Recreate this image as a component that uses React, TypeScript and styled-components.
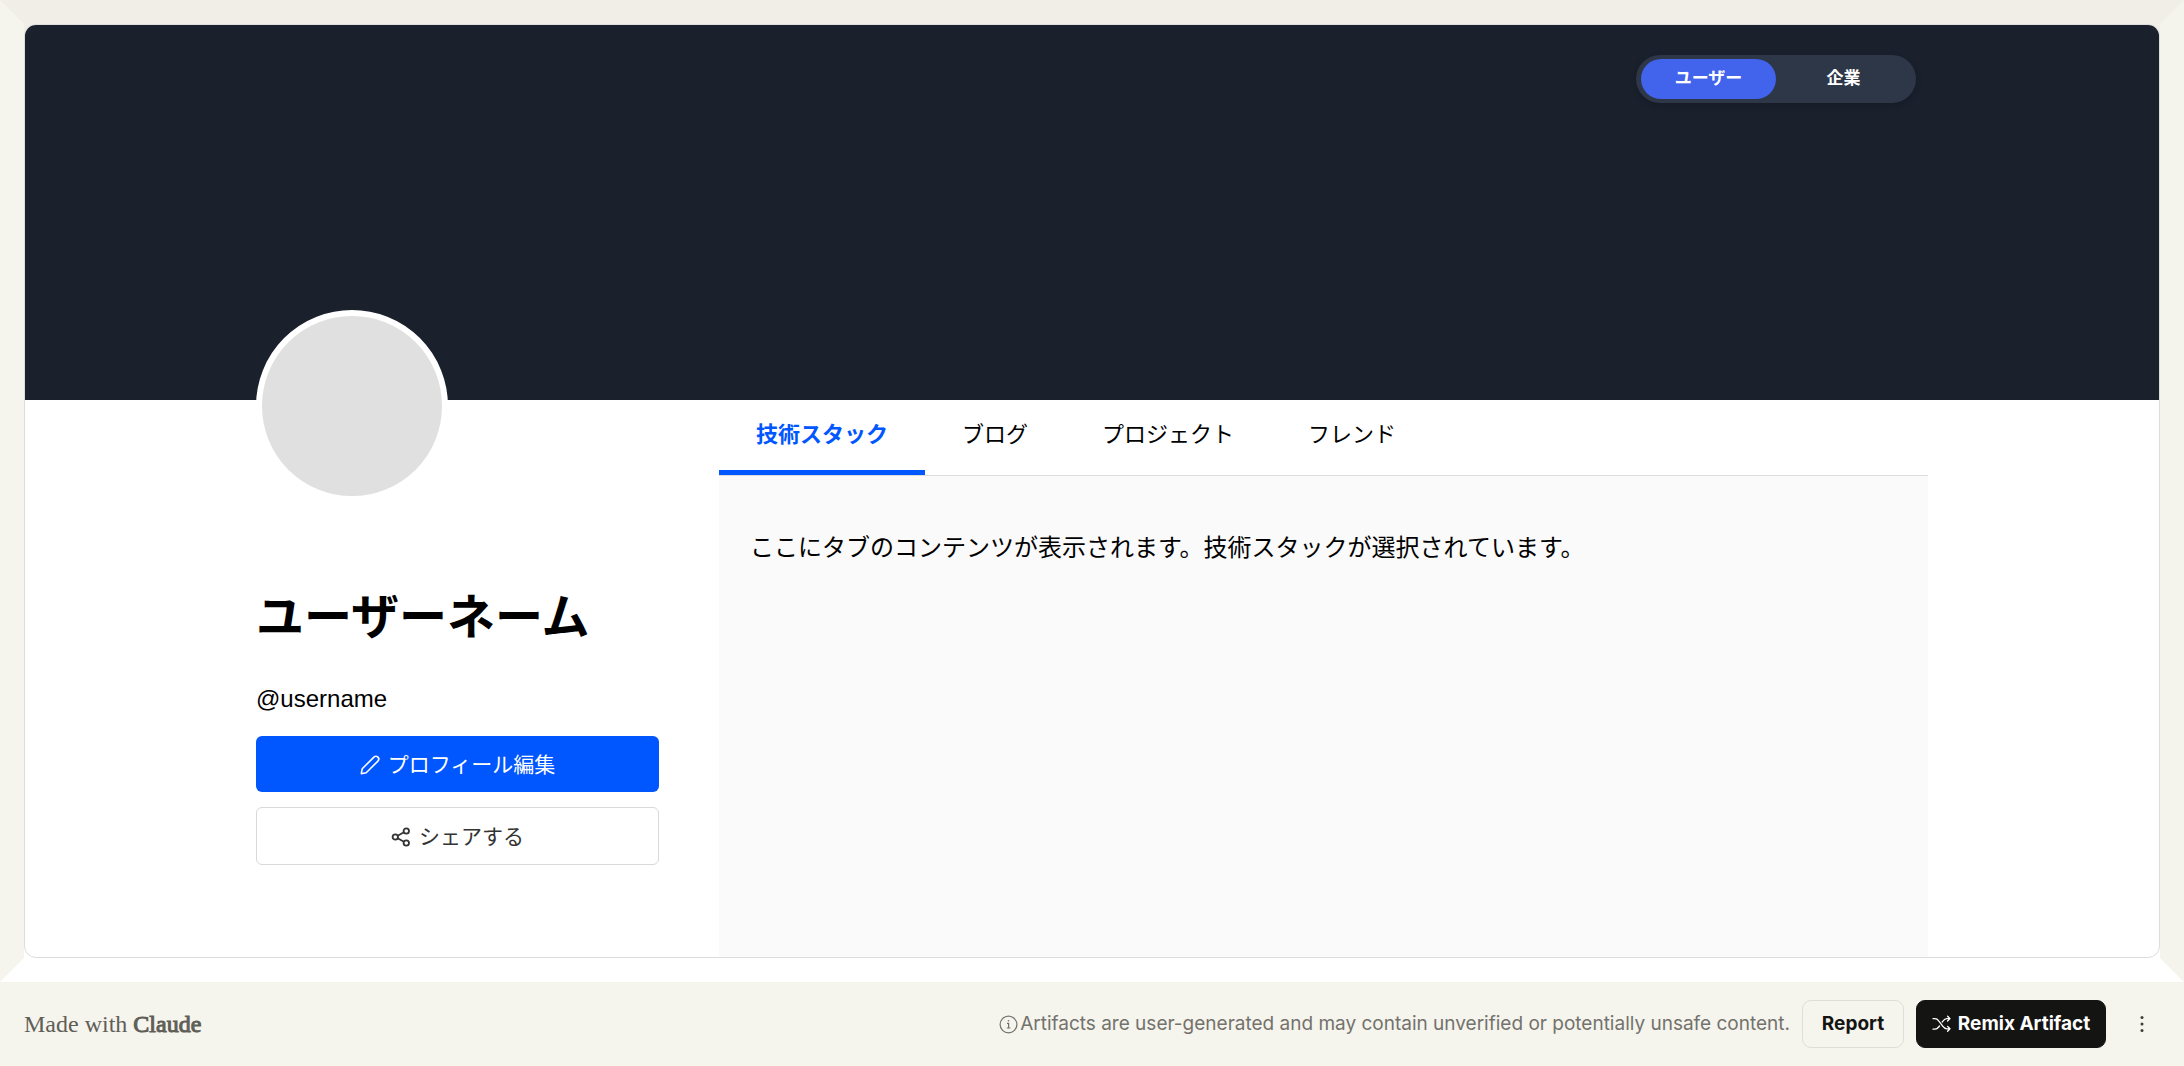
import React, { useState } from "react";
import styled, { createGlobalStyle } from "styled-components";

const jp = `"Liberation Sans", "Noto Sans CJK JP", sans-serif`;
const ui = `Inter, "Noto Sans", sans-serif`;

const GlobalStyle = createGlobalStyle`
  *, *::before, *::after { box-sizing: border-box; }
  body { margin: 0; background: #f5f4ed; font-family: ${jp}; color: #000; }
  button { font-family: inherit; cursor: pointer; }
  h1, p { margin: 0; }
`;

const Page = styled.div`
  display: flex;
  flex-direction: column;
  min-height: 100vh;
`;

const Frame = styled.div`
  flex: 1;
  display: flex;
  border: 24px solid;
  border-color: #f0eee6 #f4f3ec #ffffff #f5f5ed;
  background: linear-gradient(#f0eee6 50%, #ffffff 50%);
`;

const Card = styled.div`
  flex: 1;
  display: flex;
  flex-direction: column;
  min-width: 0;
  overflow: hidden;
  background: #fff;
  border: 1px solid #dddddb;
  border-radius: 12px;
`;

const Cover = styled.header`
  height: 375px;
  padding-top: 30px;
  background: #1a202c;
`;

const Container = styled.div`
  width: 100%;
  max-width: 1672px;
  margin: 0 auto;
`;

const CoverBar = styled(Container)`
  display: flex;
  justify-content: flex-end;
  padding-right: 12px;
`;

const ModeSwitch = styled.div`
  display: flex;
  padding: 4px 5px;
  border-radius: 25px;
  background: #2d3748;
  box-shadow: 0 2px 6px rgba(0, 0, 0, 0.15);
`;

const ModeButton = styled.button<{ $active: boolean }>`
  width: 135px;
  height: 40px;
  padding: 0;
  border: 0;
  border-radius: 20px;
  background: ${(p) => (p.$active ? "#4263eb" : "transparent")};
  color: #fff;
  font-size: 17px;
  font-weight: 700;
  line-height: 24px;
`;

const Body = styled(Container)`
  flex: 1;
  display: grid;
  grid-template-columns: 403px minmax(0, 1fr);
  column-gap: 60px;
`;

const Profile = styled.aside`
  margin-top: -90px;
  padding-bottom: 32px;
`;

const Avatar = styled.div`
  width: 192px;
  height: 192px;
  border: 6px solid #fff;
  border-radius: 50%;
  background: #e0e0e0;
`;

const Name = styled.h1`
  margin-top: 80px;
  font-size: 48px;
  font-weight: 700;
  line-height: 72px;
`;

const Handle = styled.p`
  margin-top: 27px;
  font-size: 24px;
  line-height: 36px;
`;

const Actions = styled.div`
  display: flex;
  flex-direction: column;
  gap: 15px;
  margin-top: 19px;
`;

const ActionButton = styled.button<{ $primary?: boolean }>`
  display: flex;
  align-items: center;
  justify-content: center;
  gap: 8px;
  height: ${(p) => (p.$primary ? "56px" : "58px")};
  padding: 2px 0 0;
  border: ${(p) => (p.$primary ? "0" : "1px solid #d9d9d9")};
  border-radius: 6px;
  background: ${(p) => (p.$primary ? "#0056ff" : "#fff")};
  color: ${(p) => (p.$primary ? "#fff" : "#333")};
  font-size: 21px;
  line-height: 32px;
`;

const Main = styled.main`
  display: flex;
  flex-direction: column;
  min-width: 0;
`;

const TabList = styled.div`
  display: flex;
  height: 76px;
  border-bottom: 1px solid #dcdcdc;
`;

const Tab = styled.button<{ $active: boolean }>`
  height: 75px;
  padding: 0 37px;
  border: 0;
  border-bottom: 5px solid ${(p) => (p.$active ? "#0056ff" : "transparent")};
  background: none;
  color: ${(p) => (p.$active ? "#0056ff" : "#000")};
  font-size: 22px;
  font-weight: ${(p) => (p.$active ? 700 : 400)};
  line-height: 32px;
  white-space: nowrap;
`;

const TabPanel = styled.div`
  flex: 1;
  padding: 54px 31px;
  background: #fafafa;
  font-size: 24px;
  line-height: 36px;
`;

const Footer = styled.footer`
  display: flex;
  align-items: center;
  gap: 12px;
  height: 84px;
  padding: 0 18px 0 24px;
  background: #f5f4ed;
  font-family: ${ui};
`;

const Brand = styled.a`
  margin-right: auto;
  color: #5f5e57;
  font-family: "Liberation Serif", serif;
  font-size: 24px;
  line-height: 32px;
  text-decoration: none;
`;

const BrandName = styled.span`
  -webkit-text-stroke: 1px #5f5e57;
`;

const Notice = styled.p`
  display: flex;
  align-items: center;
  gap: 2px;
  color: #73726c;
  font-size: 19px;
  line-height: 28px;
`;

const FooterButton = styled.button<{ $dark?: boolean }>`
  display: flex;
  align-items: center;
  justify-content: center;
  gap: 7px;
  width: ${(p) => (p.$dark ? "190px" : "102px")};
  height: 48px;
  padding: 0;
  border: 1px solid ${(p) => (p.$dark ? "#141413" : "#dfded6")};
  border-radius: 9px;
  background: ${(p) => (p.$dark ? "#141413" : "transparent")};
  color: ${(p) => (p.$dark ? "#fff" : "#141413")};
  font-size: 19px;
  font-weight: 700;
  line-height: 28px;
  white-space: nowrap;
`;

const MenuButton = styled.button`
  display: grid;
  place-items: center;
  width: 48px;
  height: 48px;
  padding: 0;
  border: 0;
  background: none;
  color: #3d3d3a;
`;

const PencilIcon = () => (
  <svg width="20" height="20" viewBox="0 0 20 20" fill="none" stroke="currentColor" strokeWidth="1.6" strokeLinejoin="round" aria-hidden="true">
    <path d="M1.3 18.7l.9-4.9L13.900 2.100a2.800 2.800 0 0 1 4 4L6.200 17.800z" />
  </svg>
);

const ShareIcon = () => (
  <svg width="20" height="20" viewBox="0 0 20 20" fill="none" stroke="currentColor" strokeWidth="1.8" aria-hidden="true">
    <circle cx="4.3" cy="10" r="2.7" />
    <circle cx="15.3" cy="4" r="2.7" />
    <circle cx="15.3" cy="16" r="2.7" />
    <path d="M6.7 8.700l6.200-3.400M6.700 11.300l6.200 3.400" />
  </svg>
);

const InfoIcon = () => (
  <svg width="19" height="19" viewBox="0 0 19 19" fill="none" stroke="currentColor" strokeWidth="1.2" aria-hidden="true">
    <circle cx="9.5" cy="9.5" r="8.4" />
    <path d="M8 8.400h1.600v4.400M7.800 13h3.600" />
    <circle cx="9.5" cy="5.8" r="0.8" fill="currentColor" stroke="none" />
  </svg>
);

const ShuffleIcon = () => (
  <svg width="19" height="18" viewBox="0 0 19 18" fill="none" stroke="currentColor" strokeWidth="1.3" strokeLinecap="round" strokeLinejoin="round" aria-hidden="true">
    <path d="M1 3.600h1.800c1.800 0 2.900.8 3.900 2.200l4.200 5.600c1.200 1.700 2.300 2.400 4 2.400H18M1 14.200h1.800c1.800 0 2.900-.8 3.900-2.200l.8-1M10.200 7l.7-.9c1.200-1.700 2.300-2.500 4-2.500H18M15.600 1.200L18 3.600l-2.400 2.400M15.600 11.400L18 13.800l-2.400 2.400" />
  </svg>
);

const DotsIcon = () => (
  <svg width="18" height="18" viewBox="0 0 18 18" fill="currentColor" aria-hidden="true">
    <circle cx="9" cy="2.5" r="1.5" />
    <circle cx="9" cy="9" r="1.5" />
    <circle cx="9" cy="15.5" r="1.5" />
  </svg>
);

const modes = ["ユーザー", "企業"];
const tabs = ["技術スタック", "ブログ", "プロジェクト", "フレンド"];

export default function App() {
  const [mode, setMode] = useState(modes[0]);
  const [tab, setTab] = useState(tabs[0]);

  return (
    <Page lang="ja">
      <GlobalStyle />
      <Frame>
        <Card>
          <Cover>
            <CoverBar>
              <ModeSwitch>
                {modes.map((m) => (
                  <ModeButton key={m} $active={m === mode} aria-pressed={m === mode} onClick={() => setMode(m)}>
                    {m}
                  </ModeButton>
                ))}
              </ModeSwitch>
            </CoverBar>
          </Cover>
          <Body>
            <Profile>
              <Avatar />
              <Name>ユーザーネーム</Name>
              <Handle>@username</Handle>
              <Actions>
                <ActionButton $primary>
                  <PencilIcon />
                  プロフィール編集
                </ActionButton>
                <ActionButton>
                  <ShareIcon />
                  シェアする
                </ActionButton>
              </Actions>
            </Profile>
            <Main>
              <TabList role="tablist">
                {tabs.map((t) => (
                  <Tab key={t} role="tab" $active={t === tab} aria-selected={t === tab} onClick={() => setTab(t)}>
                    {t}
                  </Tab>
                ))}
              </TabList>
              <TabPanel role="tabpanel">
                <p>{`ここにタブのコンテンツが表示されます。${tab}が選択されています。`}</p>
              </TabPanel>
            </Main>
          </Body>
        </Card>
      </Frame>
      <Footer lang="en">
        <Brand href="#">
          Made with <BrandName>Claude</BrandName>
        </Brand>
        <Notice>
          <InfoIcon />
          Artifacts are user-generated and may contain unverified or potentially unsafe content.
        </Notice>
        <FooterButton>Report</FooterButton>
        <FooterButton $dark>
          <ShuffleIcon />
          Remix Artifact
        </FooterButton>
        <MenuButton aria-label="More options">
          <DotsIcon />
        </MenuButton>
      </Footer>
    </Page>
  );
}
